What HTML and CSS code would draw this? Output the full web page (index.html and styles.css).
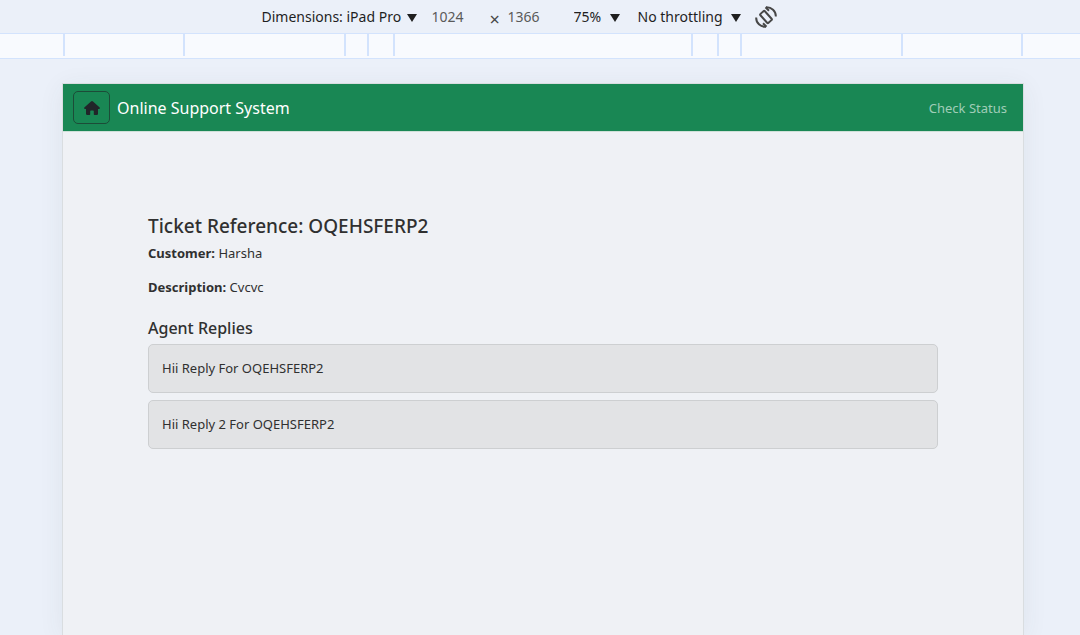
FILE: index.html
```html
<!DOCTYPE html>
<html lang="en">
<head>
<meta charset="utf-8">
<title>Online Support System</title>
<link rel="stylesheet" href="styles.css">
</head>
<body>
<div class="toolbar">
  <span class="picker picker-device">
    <select aria-label="Device"><option>Dimensions: iPad Pro</option></select>
    <svg class="caret" viewBox="0 0 10 8" aria-hidden="true"><path d="M0 0h10L5 8z"/></svg>
  </span>
  <input class="size" type="text" value="1024" aria-label="Width">
  <span class="times">×</span>
  <input class="size size-height" type="text" value="1366" aria-label="Height">
  <span class="picker picker-zoom">
    <select aria-label="Zoom"><option>75%</option></select>
    <svg class="caret" viewBox="0 0 10 8" aria-hidden="true"><path d="M0 0h10L5 8z"/></svg>
  </span>
  <span class="picker picker-throttle">
    <select aria-label="Throttling"><option>No throttling</option></select>
    <svg class="caret" viewBox="0 0 10 8" aria-hidden="true"><path d="M0 0h10L5 8z"/></svg>
  </span>
  <button class="rotate" type="button" aria-label="Rotate">
    <svg viewBox="0 0 22 22" fill="none" stroke="#474747" stroke-width="2" aria-hidden="true">
      <rect x="8" y="5" width="6" height="12" rx="1" transform="rotate(-42 11 11)"/>
      <path d="M11 1.300C16.500 1 21 5 20.800 10.500M11 20.700C5.500 21 1 17 1.200 11.500"/>
      <path d="M10.500 1.200L14 4.700M11.500 20.800L8 17.300"/>
    </svg>
  </button>
</div>
<div class="ruler">
  <span class="w-120"></span><span class="w-161"></span><span class="w-23"></span><span class="w-26"></span><span class="w-298"></span><span class="w-26"></span><span class="w-23"></span><span class="w-161"></span><span class="w-120"></span>
</div>
<div class="stage">
  <div class="device">
    <nav class="navbar">
      <button class="home" type="button" aria-label="Home">
        <svg viewBox="0 0 16 14" aria-hidden="true"><path d="M8 0Q7.500 0 7 .5L.3 6.600Q-.2 7.900 1 8H2v4.800Q2 14 3.200 14H5.500Q6.200 14 6.200 13.300V10.200Q6.200 9.500 7 9.500H9Q9.800 9.500 9.800 10.200V13.300Q9.800 14 10.500 14H12.800Q14 14 14 12.800V8H15Q16.200 7.900 15.700 6.600L9 .5Q8.500 0 8 0z"/></svg>
      </button>
      <a class="brand" href="#">Online Support System</a>
      <a class="status" href="#">Check Status</a>
    </nav>
    <main class="content">
      <h1>Ticket Reference: OQEHSFERP2</h1>
      <p><strong>Customer:</strong> Harsha</p>
      <p><strong>Description:</strong> Cvcvc</p>
      <h2>Agent Replies</h2>
      <ul class="replies">
        <li>Hii Reply For OQEHSFERP2</li>
        <li>Hii Reply 2 For OQEHSFERP2</li>
      </ul>
    </main>
  </div>
</div>
</body>
</html>
```
FILE: styles.css
```css
* { box-sizing: border-box; }

body {
  margin: 0;
  min-height: 100vh;
  display: flex;
  flex-direction: column;
  background: #ebf0f9;
  color: #303030;
  font-family: "Segoe UI", "Noto Sans", sans-serif;
  font-size: 13px;
  line-height: 20px;
}

.toolbar {
  display: flex;
  justify-content: center;
  align-items: center;
  height: 33px;
  padding-right: 42px;
  background: #ebf0f9;
}

.picker {
  display: flex;
  align-items: center;
  justify-content: space-between;
}

.picker-device { width: 155px; }
.picker-zoom { width: 46px; margin-left: 26px; }
.picker-throttle { width: 103px; margin-left: 18px; }

.toolbar select,
.toolbar input {
  appearance: none;
  border: 0;
  padding: 0;
  background: transparent;
  color: #1f1f1f;
  font: 14px/20px "Segoe UI", "Noto Sans", sans-serif;
}

.caret { width: 10px; height: 8px; margin-top: 2px; fill: #1f1f1f; }

.toolbar .size { width: 40px; margin-left: 15px; color: #5a5a5a; }
.toolbar .size-height { margin-left: 8px; }

.times {
  width: 10px;
  margin-left: 18px;
  padding-top: 4px;
  color: #474747;
  font-size: 18px;
}

.rotate {
  display: flex;
  margin-left: 14px;
  padding: 0;
  border: 0;
  background: transparent;
}

.rotate svg { width: 22px; height: 22px; }

.ruler {
  display: flex;
  justify-content: center;
  height: 26px;
  padding: 0 0 2px 6px;
  border: solid #d3e3fd;
  border-width: 1px 0;
  background: #f8fafe;
}

.ruler span { border-left: 2px solid #d3e3fd; }
.ruler span:last-child { border-right: 2px solid #d3e3fd; box-sizing: content-box; width: 118px; }
.w-23 { width: 23px; }
.w-26 { width: 26px; }
.w-120 { width: 120px; }
.w-161 { width: 161px; }
.w-298 { width: 298px; }

.stage {
  display: flex;
  flex: 1;
  padding: 24px 56px 0 62px;
  overflow: hidden;
}

.device {
  flex: 1;
  border: 1px solid #d9dde0;
  border-bottom: 0;
  background: #eff1f5;
  box-shadow: 0 4px 24px rgba(60, 64, 67, 0.07);
}

.navbar {
  display: flex;
  align-items: center;
  height: 48px;
  padding: 0 16px 0 10px;
  border-bottom: 1px solid #cfe0d8;
  background: #198754;
}

.home {
  display: flex;
  justify-content: center;
  align-items: center;
  width: 37px;
  height: 33px;
  padding: 0;
  border: 1px solid #1c4c38;
  border-radius: 5px;
  background: transparent;
}

.home svg { width: 16px; height: 14px; fill: #212529; }

.navbar a { text-decoration: none; }
.brand { margin-left: 7px; color: #fff; font-size: 16px; }
.status { margin-left: auto; color: #a0cdb8; }

.content { padding: 82px 85px 0; }

h1, h2 { margin: 0; font-weight: 500; }
h1 { font-size: 19px; line-height: 24px; }
h2 { margin-top: 21px; font-size: 16px; line-height: 20px; }

p { margin: 5px 0 14px; }
p + p { margin-top: 0; }

.replies {
  display: flex;
  flex-direction: column;
  gap: 7px;
  margin: 6px 0 0;
  padding: 0;
  list-style: none;
}

.replies li {
  padding: 13px;
  border: 1px solid #cdcfd1;
  border-radius: 5px;
  background: #e2e3e5;
  line-height: 21px;
}
```
